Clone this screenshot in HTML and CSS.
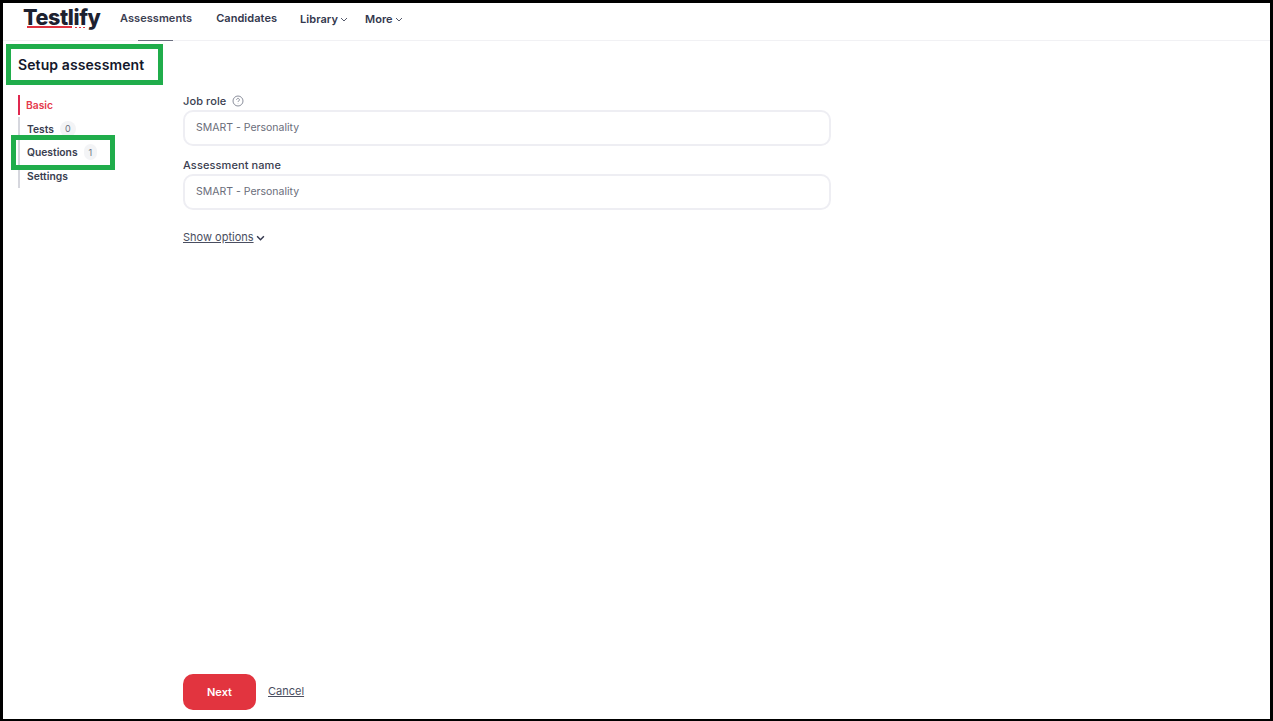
FILE: index.html
```html
<!DOCTYPE html>
<html lang="en">
<head>
<meta charset="utf-8">
<title>Setup assessment - Testlify</title>
<link rel="stylesheet" href="styles.css">
</head>
<body>
<div class="frame">
  <header class="topbar">
    <a class="logo">Testlify<span class="logo-line"></span><span class="logo-dots"></span></a>
    <nav class="nav">
      <a class="nav-item nav-active">Assessments</a>
      <a class="nav-item nav-candidates">Candidates</a>
      <a class="nav-item nav-library">Library<svg class="caret" viewBox="0 0 8 5"><path d="M1 1l3 3 3-3"/></svg></a>
      <a class="nav-item nav-more">More<svg class="caret" viewBox="0 0 8 5"><path d="M1 1l3 3 3-3"/></svg></a>
    </nav>
  </header>
  <div class="page">
    <aside class="side">
      <h1 class="title">Setup assessment</h1>
      <ul class="steps">
        <li class="step step-current">Basic</li>
        <li class="step">Tests<span class="count">0</span></li>
        <li class="step">Questions<span class="count">1</span></li>
        <li class="step">Settings</li>
      </ul>
      <span class="mark mark-title"></span>
      <span class="mark mark-questions"></span>
    </aside>
    <main class="content">
      <form class="form">
        <div class="fields">
          <label class="label">Job role<svg class="help" viewBox="0 0 12 12"><circle cx="6" cy="6" r="5"/><path d="M4.6 4.7a1.4 1.4 0 1 1 2.2 1.2c-.5.3-.8.6-.8 1.1"/><path d="M6 8.6v.3"/></svg></label>
          <div class="input">SMART - Personality</div>
          <label class="label label-second">Assessment name</label>
          <div class="input">SMART - Personality</div>
          <a class="options"><span class="options-text">Show options</span><svg class="caret caret-dark" viewBox="0 0 8 5"><path d="M1 1l3 3 3-3"/></svg></a>
        </div>
        <div class="actions">
          <button class="next" type="button">Next</button>
          <a class="cancel">Cancel</a>
        </div>
      </form>
    </main>
  </div>
</div>
</body>
</html>
```

FILE: styles.css
```css
* { box-sizing: border-box; }
html, body { margin: 0; padding: 0; height: 100%; background: #fff; }
body { font-family: "Inter", "Open Sans", sans-serif; color: #33374d; overflow: hidden; }
a { color: inherit; text-decoration: none; }

.frame {
  width: 1273px;
  height: 721px;
  border: solid #000;
  border-width: 3px 3px 2px 3px;
  display: flex;
  flex-direction: column;
}

.topbar {
  height: 38px;
  flex: none;
  display: flex;
  align-items: center;
  border-bottom: 1px solid #f1f1f4;
  padding-left: 20px;
}
.logo {
  position: relative;
  width: 97px;
  font-family: "Inter", sans-serif;
  font-weight: 800;
  font-size: 21.5px;
  line-height: 26px;
  letter-spacing: -0.4px;
  color: #1d2130;
  margin-top: -9px;
}
.logo-line {
  position: absolute;
  left: 4px;
  top: 22px;
  width: 45px;
  height: 2px;
  background: #e0323f;
}
.logo-dots {
  position: absolute;
  left: 52px;
  top: 23px;
  width: 11px;
  height: 1px;
  background: repeating-linear-gradient(90deg, #e0323f 0 2px, transparent 2px 4px);
}
.nav { display: flex; align-items: center; height: 100%; font-size: 11px; font-weight: 600; letter-spacing: 0.05px; }
.nav-item { display: flex; align-items: center; gap: 2px; position: relative; }
.nav-active { height: 100%; padding-bottom: 7px; color: #3c4052; }
.nav-active::after {
  content: "";
  position: absolute;
  left: 18px;
  bottom: -1px;
  width: 35px;
  height: 1px;
  background: #6b7080;
}
.nav-candidates { margin-left: 24px; padding-bottom: 7px; }
.nav-library { margin-left: 23px; padding-bottom: 5px; }
.nav-more { margin-left: 17px; padding-bottom: 5px; }
.caret { width: 8px; height: 5px; fill: none; stroke: #555a6c; stroke-width: 1; margin-top: 1px; }
.caret-dark { stroke: #33374d; stroke-width: 1.3; margin-left: 2px; width: 9px; height: 6px; }

.page { flex: 1; display: flex; min-height: 0; }
.side { width: 180px; flex: none; position: relative; padding: 15px 0 0 15px; }
.title { margin: 0; font-size: 14px; line-height: 18px; font-weight: 600; color: #14172b; letter-spacing: 0.1px; }
.steps { list-style: none; margin: 21px 0 0; padding: 0; }
.step {
  display: flex;
  align-items: center;
  height: 23.5px;
  border-left: 2px solid #d6d7de;
  padding-left: 7px;
  font-size: 10.3px;
  font-weight: 600;
  color: #3a3e50;
}
.step-current { border-left-color: #e0284f; color: #e53a4c; height: 20px; margin-bottom: 2px; padding-left: 6px; }
.count {
  height: 16px;
  padding: 0 5px;
  margin-left: 6px;
  border-radius: 8px;
  background: #f3f4f6;
  color: #6b7080;
  font-size: 9px;
  font-weight: 400;
  display: flex;
  align-items: center;
  justify-content: center;
}
.mark { position: absolute; border: 5px solid #20ad4b; pointer-events: none; }
.mark-title { left: 3px; top: 3px; width: 157px; height: 41px; }
.mark-questions { left: 8px; top: 94px; width: 104px; height: 35px; }

.content { flex: 1; min-width: 0; }
.form { width: 648px; height: 100%; display: flex; flex-direction: column; justify-content: space-between; padding: 53px 0 9px; }
.label { display: flex; align-items: center; font-size: 11px; line-height: 14px; font-weight: 500; letter-spacing: 0.1px; color: #3a3e50; margin-bottom: 2px; }
.label-second { margin-top: 12px; margin-bottom: 2px; }
.help { width: 12px; height: 12px; margin-left: 6px; fill: none; stroke: #8b8f9c; stroke-width: 1; }
.input {
  height: 36px;
  border: 2px solid #eeeef3;
  border-radius: 10px;
  padding: 0 0 1px 11px;
  display: flex;
  align-items: center;
  font-size: 10.5px;
  color: #6a6d7a;
}
.options { display: flex; align-items: center; margin-top: 20px; font-size: 11px; color: #4a4e60; }
.options-text { text-decoration: underline; }
.actions { display: flex; align-items: center; gap: 12px; }
.next {
  width: 73px;
  height: 36px;
  border: 0;
  border-radius: 10px;
  background: #e2343f;
  color: #fff;
  font: 600 11px "Inter", sans-serif;
}
.cancel { font-size: 11px; color: #4a4e60; text-decoration: underline; margin-top: -3px; }
```
